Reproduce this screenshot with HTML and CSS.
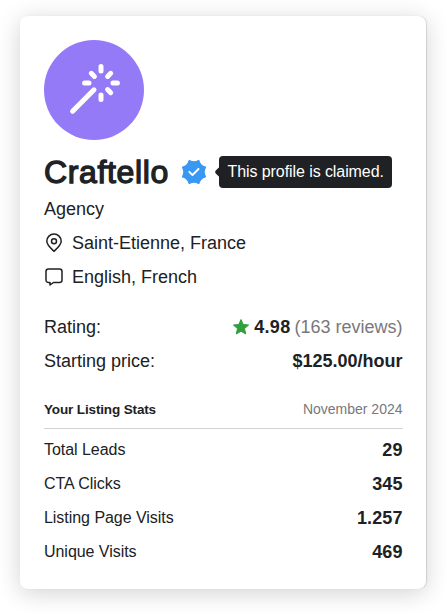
FILE: index.html
```html
<!DOCTYPE html>
<html lang="en">
<head>
<meta charset="utf-8">
<title>Craftello</title>
<link rel="stylesheet" href="styles.css">
</head>
<body>
<main class="card">
  <div class="avatar">
    <svg width="100" height="100" viewBox="0 0 100 100" fill="none" stroke="#fff" stroke-width="5" stroke-linecap="round">
      <path d="M28.600 71.200 50 49.800M57 31v-4.400M57 55v4.400M45 43h-4.400M69 43h4.400M63.600 36.400l3.100-3.100M50.400 36.400l-3.100-3.100M63.600 49.600l3.100 3.100"/>
    </svg>
  </div>
  <div class="title">
    <h1 class="name">Craftello</h1>
    <svg class="badge" width="26" height="26" viewBox="-13 -13 26 26">
      <path fill="#3898f3" stroke="#3898f3" stroke-width="1.600" stroke-linejoin="round" d="M4.670-11.270Q6.080-6.080 11.270-4.670Q8.600 0 11.270 4.670Q6.080 6.080 4.670 11.270Q0 8.600-4.670 11.270Q-6.080 6.080-11.270 4.670Q-8.600 0-11.270-4.670Q-6.080-6.080-4.670-11.270Q0-8.600 4.670-11.270Z"/>
      <path d="m-4.700-.2 3.200 3.200 6-6" fill="none" stroke="#fff" stroke-width="1.900" stroke-linecap="round" stroke-linejoin="round"/>
    </svg>
    <div class="tooltip">This profile is claimed.</div>
  </div>
  <p class="meta">Agency</p>
  <p class="meta">
    <svg class="icon" width="20" height="20" viewBox="0 0 20 20" fill="none" stroke="#202124" stroke-width="1.500"><path d="M10 18.300C6.500 15 2.800 11.800 2.800 8.200a7.200 7.200 0 0 1 14.400 0c0 3.600-3.700 6.800-7.200 10.100Z"/><circle cx="10" cy="8.200" r="2.500"/></svg>
    Saint-Etienne, France
  </p>
  <p class="meta">
    <svg class="icon" width="20" height="20" viewBox="0 0 20 20" fill="none" stroke="#202124" stroke-width="1.500" stroke-linejoin="round"><path d="M4.500 2h11a2.500 2.500 0 0 1 2.500 2.500v8.500a2.500 2.500 0 0 1-2.500 2.500H9.500L6 18v-2.500H4.500A2.500 2.500 0 0 1 2 13V4.500A2.500 2.500 0 0 1 4.500 2Z"/></svg>
    English, French
  </p>
  <dl class="facts">
    <div class="row">
      <dt>Rating:</dt>
      <dd class="score">
        <svg class="star" width="18" height="18" viewBox="0 0 18 18"><path d="m9 1.500 2.200 5 5.400.5-4.100 3.600 1.200 5.400L9 13.200 4.300 16l1.200-5.400L1.400 7l5.400-.5Z" fill="#319f3e" stroke="#319f3e" stroke-linejoin="round"/></svg>
        <b class="points">4.98</b><span class="reviews">(163 reviews)</span>
      </dd>
    </div>
    <div class="row"><dt>Starting price:</dt><dd class="price">$125.00/hour</dd></div>
  </dl>
  <div class="stats-head"><h2 class="stats-title">Your Listing Stats</h2><span class="month">November 2024</span></div>
  <dl class="stats">
    <div class="row"><dt>Total Leads</dt><dd>29</dd></div>
    <div class="row"><dt>CTA Clicks</dt><dd>345</dd></div>
    <div class="row"><dt>Listing Page Visits</dt><dd>1.257</dd></div>
    <div class="row"><dt>Unique Visits</dt><dd>469</dd></div>
  </dl>
</main>
</body>
</html>
```

FILE: styles.css
```css
* { box-sizing: border-box; }
body { min-height: 613px; margin: 0; padding: 16px 0 0 20px; background: #fff; color: #202124; font-family: "Liberation Sans", Arial, sans-serif; }
h1, h2, p, dl, dd { margin: 0; }
.card { width: 406px; height: 573px; padding: 24px 23px 0 24px; border-radius: 8px; background: #fff; box-shadow: 0 4px 24px rgba(0,0,0,.18), 1px 0 1px rgba(0,0,0,.12); }
.avatar { width: 100px; height: 100px; border-radius: 50%; background: #957af8; }
.avatar svg { display: block; }
.title { display: flex; align-items: center; height: 40px; margin-top: 12px; white-space: nowrap; }
.name { width: 124px; font-size: 32px; font-weight: 400; line-height: 40px; letter-spacing: .63px; -webkit-text-stroke: 1.300px #202124; }
.badge { flex: none; margin-left: 13px; }
.tooltip { position: relative; width: 173px; height: 32px; margin-left: 12px; padding-left: 8.500px; border-radius: 4px; background: #202124; color: #fff; font-size: 16px; letter-spacing: -.08px; line-height: 32px; }
.tooltip::before { content: ""; position: absolute; left: -3px; top: 12px; width: 8px; height: 8px; border-radius: 2px; background: #202124; transform: rotate(45deg); }
.meta { display: flex; align-items: center; height: 34px; font-size: 18px; }
.icon { margin-right: 8px; }
.facts { margin-top: 16px; font-size: 18px; }
.row { display: flex; justify-content: space-between; align-items: center; height: 34px; padding-right: .5px; }
.score { display: flex; align-items: center; }
.star { margin-right: 4px; }
.points { letter-spacing: .3px; }
.reviews { margin-left: 4px; color: #77787b; }
.price { font-weight: 700; }
.stats-head { display: flex; justify-content: space-between; align-items: center; height: 39px; margin-top: 12px; padding: 0 0 1px; border-bottom: 1px solid #d2d2d3; font-size: 14px; }
.stats-title { padding-top: 1px; font-size: 13.500px; letter-spacing: -.14px; }
.month { padding-right: .5px; color: #77787b; }
.stats { margin-top: 4px; font-size: 16px; }
.stats dt { letter-spacing: -.04px; }
.stats dd { font-size: 18px; font-weight: 700; letter-spacing: .1px; }
```
